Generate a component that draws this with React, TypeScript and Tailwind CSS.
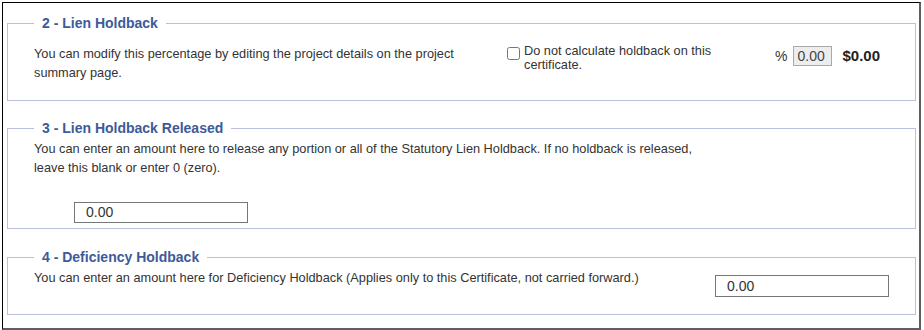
import React from 'react';

const legendCls = "px-2 text-[14px] font-bold leading-[16px] text-[#3d5a99]";
const fieldsetCls = "w-[909px] border border-[#b9c1dd] pl-[26px]";

export default function App() {
    return (
        <div className="h-[330px] bg-white font-['Liberation_Sans',Arial,sans-serif] text-[#333]">
            <div className="ml-[2px] mt-[2px] h-[328px] w-[919px] border-t border-l border-r-2 border-b-2 border-t-black border-l-black border-r-[#5f5f5f] border-b-[#5f5f5f] pl-[4px] pt-[12px]">
                {/* 2 - Lien Holdback */}
                <fieldset className={`${fieldsetCls} pb-[18px]`}>
                    <legend className={legendCls}>2 - Lien Holdback</legend>
                    <div className="flex items-start pt-[13px]">
                        <p className="w-[473px] flex-none pr-[30px] text-[12.75px] leading-[19px]">
                            You can modify this percentage by editing the project details on the project summary page.
                        </p>
                        <label className="flex w-[268px] flex-none items-start gap-[4px]">
                            <input type="checkbox" className="m-0 mt-[3px] h-[13px] w-[13px] flex-none" />
                            <span className="w-[215px] text-[12.75px] leading-[14px]">
                                Do not calculate holdback on this certificate.
                            </span>
                        </label>
                        <div className="flex items-center pt-[1px]">
                            <span className="text-[14px]">%</span>
                            <input
                                readOnly
                                value="0.00"
                                className="ml-[6px] h-[20px] w-[39px] border border-[#a9a9a9] bg-[#ededed] px-[3px] text-[14px] text-[#444] outline-none"
                            />
                            <span className="ml-[10px] text-[15px] font-bold text-[#222]">$0.00</span>
                        </div>
                    </div>
                </fieldset>

                {/* 3 - Lien Holdback Released */}
                <fieldset className={`${fieldsetCls} mt-[19px] pb-[5px]`}>
                    <legend className={legendCls}>3 - Lien Holdback Released</legend>
                    <p className="pt-[3px] text-[12.75px] leading-[19px]">
                        You can enter an amount here to release any portion or all of the Statutory Lien Holdback. If no holdback is released,
                        <br />
                        leave this blank or enter 0 (zero).
                    </p>
                    <input
                        readOnly
                        value="0.00"
                        className="ml-[40px] mt-[25px] block h-[21px] w-[174px] border border-[#767676] bg-white px-[11px] text-[14px] text-[#333] outline-none"
                    />
                </fieldset>

                {/* 4 - Deficiency Holdback */}
                <fieldset className={`${fieldsetCls} mt-[20px] pb-[17px]`}>
                    <legend className={legendCls}>4 - Deficiency Holdback</legend>
                    <div className="flex items-start pt-[3px]">
                        <p className="w-[681px] flex-none text-[12.75px] leading-[19px]">
                            You can enter an amount here for Deficiency Holdback (Applies only to this Certificate, not carried forward.)
                        </p>
                        <input
                            readOnly
                            value="0.00"
                            className="mt-[7px] h-[22px] w-[174px] border border-[#767676] bg-white px-[11px] text-[14px] text-[#333] outline-none"
                        />
                    </div>
                </fieldset>
            </div>
        </div>
    );
}
